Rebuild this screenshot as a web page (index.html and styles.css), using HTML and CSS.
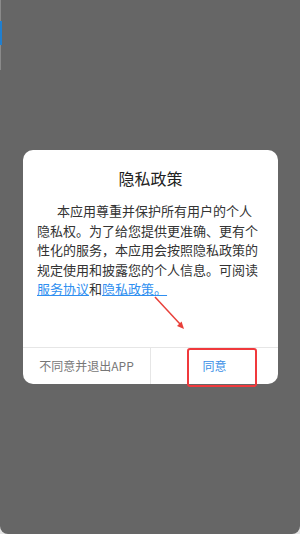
FILE: index.html
```html
<!DOCTYPE html>
<html lang="zh-CN">
<head>
  <meta charset="UTF-8">
  <meta name="viewport" content="width=device-width, initial-scale=1">
  <title>隐私政策</title>
  <link rel="stylesheet" href="styles.css">
</head>
<body>
  <div class="screen">
    <!-- thin edge of the page behind the mask -->
    <div class="edge"><span class="edge-mark"></span></div>

    <div class="dialog">
      <h2 class="dialog-title">隐私政策</h2>
      <p class="dialog-text">本应用尊重并保护所有用户的个人隐私权。为了给您提供更准确、更有个性化的服务，本应用会按照隐私政策的规定使用和披露您的个人信息。可阅读<a class="link" href="#">服务协议</a>和<a class="link" href="#">隐私政策。</a></p>
      <div class="dialog-actions">
        <button class="action action-cancel">不同意并退出APP</button>
        <button class="action action-ok">同意</button>
      </div>
    </div>

    <!-- annotation: arrow + highlight box -->
    <svg class="annot" width="300" height="534" viewBox="0 0 300 534">
      <line x1="155" y1="297" x2="180" y2="324" stroke="#e8403a" stroke-width="1.5"/>
      <polygon points="184,329 177,326 181.6,321.6" fill="#e8403a"/>
    </svg>
    <div class="mark-box"></div>
  </div>
</body>
</html>
```

FILE: styles.css
```css
* {
  box-sizing: border-box;
  margin: 0;
  padding: 0;
}
body {
  width: 300px;
  height: 534px;
  background: #e6e6e6;
  font-family: "Noto Sans CJK SC", "Noto Sans", sans-serif;
  overflow: hidden;
}
.screen {
  position: relative;
  width: 300px;
  height: 534px;
  background: #666;
  border-radius: 0 0 8px 8px;
  display: flex;
  align-items: center;
  justify-content: center;
}
/* left edge strip */
.edge {
  position: absolute;
  left: 0;
  top: 0;
  width: 1px;
  height: 70px;
  background: #8a8a8a;
}
.edge-mark {
  display: block;
  margin-top: 21px;
  width: 2px;
  height: 24px;
  background: #1f7fd0;
}
/* Dialog */
.dialog {
  width: 255px;
  height: 234px;
  margin-left: 1px;
  background: #fff;
  border-radius: 10px;
  display: flex;
  flex-direction: column;
  overflow: hidden;
}
.dialog-title {
  margin-top: 17px;
  font-size: 16px;
  line-height: 22px;
  font-weight: normal;
  color: #222;
  text-align: center;
}
.dialog-text {
  margin-top: 12px;
  padding: 0 17px 0 14px;
  font-size: 13px;
  line-height: 19.5px;
  color: #333;
  text-indent: 20px;
}
.link {
  color: #2f8ff0;
  text-decoration: underline;
}
.dialog-actions {
  margin-top: auto;
  height: 37px;
  border-top: 1px solid #e6e6e6;
  display: flex;
}
.action {
  flex: 1;
  border: none;
  background: none;
  font-family: inherit;
  font-size: 12px;
  line-height: 36px;
}
.action-cancel {
  color: #777;
  border-right: 1px solid #e6e6e6;
}
.action-ok {
  color: #3a8ee6;
}
/* annotation overlay */
.annot {
  position: absolute;
  left: 0;
  top: 0;
  pointer-events: none;
}
.mark-box {
  position: absolute;
  left: 187px;
  top: 348px;
  width: 70px;
  height: 39px;
  border: 2px solid #f0393c;
  border-radius: 3px;
}
```
